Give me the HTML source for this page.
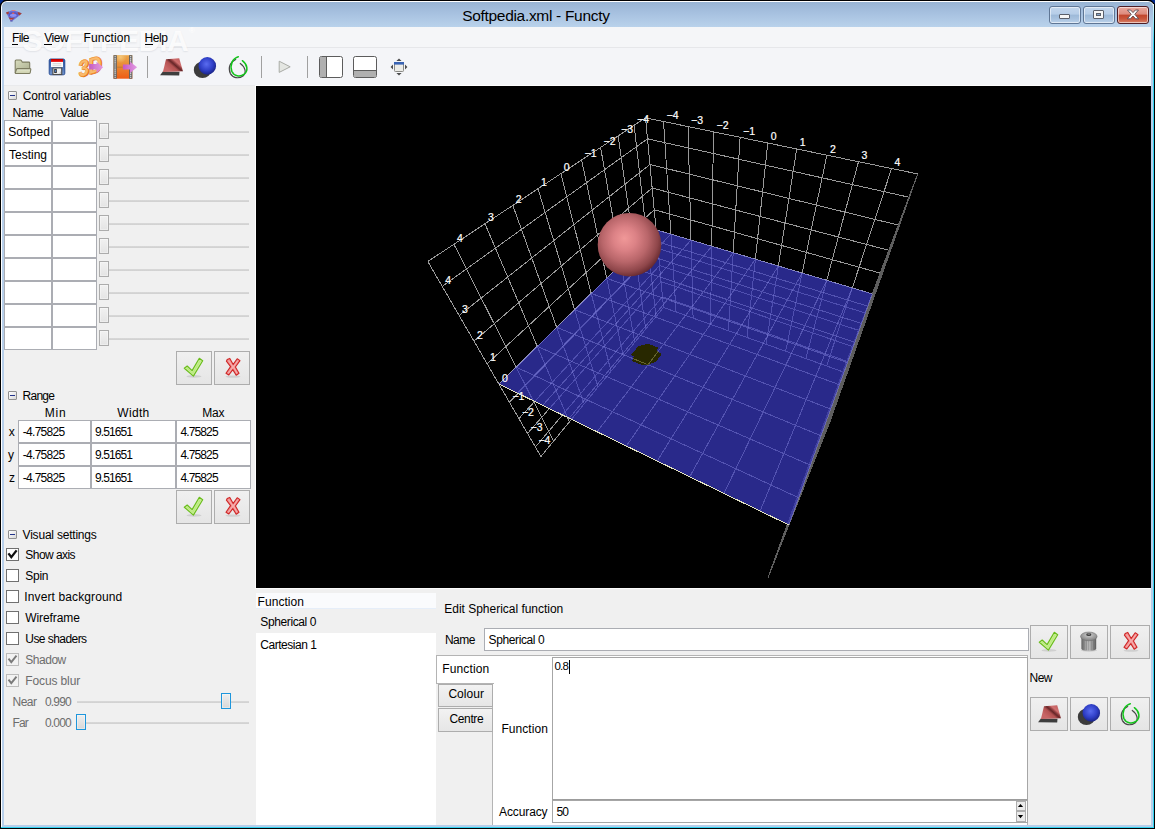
<!DOCTYPE html>
<html><head><meta charset="utf-8"><title>Softpedia.xml - Functy</title>
<style>
html,body{margin:0;padding:0;background:#000;}
body{width:1155px;height:829px;overflow:hidden;position:relative;font-family:"Liberation Sans",sans-serif;font-size:12px;color:#000;}
.a{position:absolute;box-sizing:border-box;}
.t{position:absolute;white-space:pre;font-family:"Liberation Sans",sans-serif;}
svg{position:absolute;overflow:visible;}
.gl{left:256px;top:86px;overflow:hidden;}
.cell{position:absolute;box-sizing:border-box;background:#fff;border:1px solid #abadb3;}
.btn{position:absolute;box-sizing:border-box;border:1px solid #acacac;background:linear-gradient(#f2f2f2,#ebebeb 50%,#dddddd 51%,#cfcfcf);box-shadow:inset 0 0 0 1px rgba(255,255,255,.75);}
.fbtn{position:absolute;box-sizing:border-box;border:1px solid #adadad;background:linear-gradient(#f0f0f0,#e5e5e5);}
.exp{position:absolute;box-sizing:border-box;width:9px;height:9px;border:1px solid #919191;border-radius:1px;background:linear-gradient(135deg,#fff,#d8d8d8);}
.exp:after{content:"";position:absolute;left:1px;top:3px;width:5px;height:1px;background:#22338a;}
.cb{position:absolute;box-sizing:border-box;width:13px;height:13px;border:1px solid #707070;background:#fff;}
.cb.dis{border-color:#bcbcbc;background:#f2f2f2;}
.trk{position:absolute;height:2px;background:linear-gradient(#d9d9d9,#d0d0d0);}
.thumb{position:absolute;box-sizing:border-box;width:10px;height:16px;border:1px solid #acacac;background:linear-gradient(#f1f1f1,#e4e4e4);box-shadow:inset 0 0 0 1px rgba(255,255,255,.35);}
</style></head>
<body>
<div class="a" style="left:0;top:0;width:1155px;height:829px;background:#000;"></div>
<div class="a" style="left:1px;top:1px;width:1153px;height:827px;background:#fff;border-radius:6px 6px 0 0;"></div>
<div class="a" style="left:1px;top:827px;width:1153px;height:1px;background:#32d2f0;"></div>
<div class="a" style="left:1153px;top:4px;width:1px;height:824px;background:linear-gradient(#e8fbff,#32d2f0 40px);"></div>
<div class="a" style="left:2px;top:2px;width:1151px;height:825px;background:#b7cfea;border-radius:5px 5px 0 0;"></div>
<div class="a" style="left:2px;top:2px;width:1151px;height:25px;background:linear-gradient(#98b4d4,#a7c1e0 45%,#b9d2eb);border-radius:5px 5px 0 0;"></div>
<div class="a" style="left:0;top:0;width:4px;height:4px;background:#00288c;clip-path:polygon(0 0,100% 0,0 100%);"></div>
<div class="a" style="left:1151px;top:0;width:4px;height:4px;background:#00288c;clip-path:polygon(0 0,100% 0,100% 100%);"></div>
<div class="a" style="left:4px;top:27px;width:1147px;height:798px;background:#f0f0f0;"></div>
<div class="a" style="left:4px;top:27px;width:1147px;height:20px;background:#f5f6f8;"></div>
<div class="a" style="left:4px;top:47px;width:1147px;height:1px;background:#e6e7ea;"></div>
<div class="a" style="left:4px;top:48px;width:1147px;height:37px;background:#f4f5f8;"></div>
<div class="a" style="left:4px;top:85px;width:251px;height:1px;background:#e9eaec;"></div>
<div class="a" style="left:255px;top:85px;width:896px;height:1px;background:#fdfdfd;"></div>
<span class="t" style="left:462.20px;top:5.78px;font-size:15.5px;line-height:19.5px;color:#000;letter-spacing:-0.307px;">Softpedia.xml - Functy</span><svg class="gl" width="895" height="502" viewBox="0 0 895 502">
<defs>
<radialGradient id="sph" cx="0.44" cy="0.42" r="0.60" fx="0.42" fy="0.40">
<stop offset="0" stop-color="#f09898"/><stop offset="0.3" stop-color="#dc8286"/><stop offset="0.6" stop-color="#b9666a"/><stop offset="0.85" stop-color="#8e464a"/><stop offset="1" stop-color="#64282e"/>
</radialGradient>
<clipPath id="qc"><polygon points="400.1,143.8 616.3,207.9 532.9,439.0 242.9,298.1"/></clipPath>
<clipPath id="shc"><polygon points="374.8,269.1 382.4,260.2 392.4,257.7 402.9,261.9 400.6,264.4 405.6,268.2 400.3,275.3 393.1,278.5 385.1,278.5 376.1,275.1 377.9,270.4"/></clipPath>
</defs>
<rect width="895" height="502" fill="#000"/>
<g fill="none" stroke="#999" stroke-width="1" shape-rendering="crispEdges">
<path d="M407.5 221.5L389.5 31.8M407.5 221.5L284.9 370.5M400.0 230.6L378.1 39.3M406.4 210.8L279.4 361.0M389.7 243.1L362.1 49.9M405.0 195.7L271.5 347.5M378.8 256.4L344.6 61.4M403.5 179.6L262.9 332.6M367.3 270.4L325.6 73.9M401.9 162.4L253.4 316.2M355.0 285.3L304.8 87.6M400.1 143.8L242.9 298.1M342.0 301.1L282.0 102.7M398.2 123.7L231.1 277.8M328.2 317.9L256.8 119.3M396.1 102.0L218.0 255.1M313.4 335.8L229.0 137.7M393.9 78.5L203.1 229.5M297.6 355.0L197.9 158.2M391.5 52.8L186.2 200.4M284.9 370.5L171.8 175.5M389.5 31.8L171.8 175.5"/><path d="M407.5 221.5L389.5 31.8M407.5 221.5L586.8 285.8M420.1 226.0L407.5 35.5M406.4 210.8L590.8 275.2M437.1 232.1L432.0 40.5M405.0 195.7L596.4 260.4M454.5 238.4L457.5 45.8M403.5 179.6L602.5 244.3M472.5 244.8L484.1 51.3M401.9 162.4L609.1 226.9M491.0 251.5L511.8 57.0M400.1 143.8L616.3 207.9M510.1 258.3L540.7 62.9M398.2 123.7L624.1 187.1M529.6 265.3L570.9 69.2M396.1 102.0L632.8 164.3M549.8 272.5L602.5 75.7M393.9 78.5L642.3 139.1M570.6 280.0L635.6 82.5M391.5 52.8L652.9 111.2M586.8 285.8L661.7 87.9M389.5 31.8L661.7 87.9"/>
</g>
<polygon points="661.7,87.9 574.1,335.2 512.0,491.6 586.8,285.8" fill="#5e5e5e" stroke="#5e5e5e" stroke-width="1" shape-rendering="crispEdges"/>
<polygon points="400.1,143.8 616.3,207.9 532.9,439.0 242.9,298.1" fill="#3737b8" fill-opacity="0.75" shape-rendering="crispEdges"/>
<g fill="none" stroke="#9090e6" stroke-opacity="0.42" stroke-width="1" shape-rendering="crispEdges"><path d="M400.1 143.8L242.9 298.1M400.1 143.8L616.3 207.9M414.9 148.2L261.3 307.0M391.1 152.6L611.8 220.2M435.0 154.1L286.7 319.3M378.5 165.0L605.6 237.5M455.7 160.3L313.2 332.3M365.1 178.1L598.8 256.3M477.2 166.6L341.1 345.8M350.7 192.3L591.5 276.7M499.4 173.2L370.4 360.0M335.2 207.4L583.5 298.8M522.3 180.0L401.2 375.0M318.6 223.7L574.7 323.1M546.1 187.1L433.7 390.8M300.7 241.3L565.1 349.8M570.7 194.4L467.9 407.4M281.2 260.4L554.5 379.2M596.3 201.9L504.1 425.0M260.1 281.1L542.7 411.8M616.3 207.9L532.9 439.0M242.9 298.1L532.9 439.0"/></g>
<path d="M242.9 298.1L532.9 439.0" stroke="#e2e2c4" stroke-width="1" fill="none" shape-rendering="crispEdges"/>
<polygon points="374.8,269.1 382.4,260.2 392.4,257.7 402.9,261.9 400.6,264.4 405.6,268.2 400.3,275.3 393.1,278.5 385.1,278.5 376.1,275.1 377.9,270.4" fill="#282800" shape-rendering="crispEdges"/>
<g clip-path="url(#shc)" fill="none" stroke="#66662e" stroke-width="1" shape-rendering="crispEdges"><path d="M400.1 143.8L242.9 298.1M400.1 143.8L616.3 207.9M414.9 148.2L261.3 307.0M391.1 152.6L611.8 220.2M435.0 154.1L286.7 319.3M378.5 165.0L605.6 237.5M455.7 160.3L313.2 332.3M365.1 178.1L598.8 256.3M477.2 166.6L341.1 345.8M350.7 192.3L591.5 276.7M499.4 173.2L370.4 360.0M335.2 207.4L583.5 298.8M522.3 180.0L401.2 375.0M318.6 223.7L574.7 323.1M546.1 187.1L433.7 390.8M300.7 241.3L565.1 349.8M570.7 194.4L467.9 407.4M281.2 260.4L554.5 379.2M596.3 201.9L504.1 425.0M260.1 281.1L542.7 411.8M616.3 207.9L532.9 439.0M242.9 298.1L532.9 439.0"/></g>
<circle cx="373.5" cy="158.7" r="31.8" fill="url(#sph)"/>
<g fill="#fff" stroke="#fff" stroke-width="0.2" font-family='"Liberation Sans", sans-serif' font-size="10.5"><text x="410.5" y="32.9">−4</text><text x="381.1" y="36.7">−4</text><text x="282.4" y="358.4">−4</text><text x="435.0" y="37.9">−3</text><text x="365.1" y="47.3">−3</text><text x="274.5" y="344.9">−3</text><text x="460.5" y="43.2">−2</text><text x="347.6" y="58.8">−2</text><text x="265.9" y="330.0">−2</text><text x="487.1" y="48.7">−1</text><text x="328.6" y="71.3">−1</text><text x="256.4" y="313.6">−1</text><text x="514.8" y="54.4">0</text><text x="307.8" y="85.0">0</text><text x="245.9" y="295.5">0</text><text x="543.7" y="60.3">1</text><text x="285.0" y="100.1">1</text><text x="234.1" y="275.2">1</text><text x="573.9" y="66.6">2</text><text x="259.8" y="116.7">2</text><text x="221.0" y="252.5">2</text><text x="605.5" y="73.1">3</text><text x="232.0" y="135.1">3</text><text x="206.1" y="226.9">3</text><text x="638.6" y="79.9">4</text><text x="200.9" y="155.6">4</text><text x="189.2" y="197.8">4</text></g>
</svg>
<svg style="left:5px;top:9px" width="18" height="14" viewBox="0 0 18 14">
<path d="M1.2 3.6 L6.5 1.4 L12 2.2 L16.6 4.2 L13.5 7.2 L8 11.6 L5.6 12.2 L3.4 8 Z" fill="#6a6ed8"/>
<path d="M1 3.6 L3.6 2.4 L4 4.6 L2 5.4Z M12.6 3 L16.8 4.2 L14.6 6.4 L12.8 5Z M3.6 8.2 L6.8 9 L9.8 8.4 L7.6 10.4 L5 10.4Z" fill="#a84034"/>
<path d="M6.9 1.2 h3.6 v0.9 h-3.6z M5.2 10.2 h1.8 v1 h-1.8z" fill="#ee7468"/>
<ellipse cx="8.3" cy="5.6" rx="4.6" ry="2.5" fill="#5458c0"/>
<ellipse cx="8.3" cy="6.3" rx="3.4" ry="1.6" fill="#8c90f4"/>
<ellipse cx="8.2" cy="4.3" rx="1.3" ry="0.8" fill="#e8645c"/>
<path d="M5.4 11.4 h2.2 v1 h-2.2z" fill="#4448a8"/>
</svg>
<div class="a" style="left:1049px;top:6px;width:32px;height:18px;border:1px solid #5f7695;border-radius:3px;background:linear-gradient(#c3d6ec,#b6cde8 45%,#9db9d8 50%,#a8c2df 75%,#bdd3eb);box-shadow:inset 0 0 0 1px rgba(255,255,255,.55);"></div>
<div class="a" style="left:1083px;top:6px;width:32px;height:18px;border:1px solid #5f7695;border-radius:3px;background:linear-gradient(#c3d6ec,#b6cde8 45%,#9db9d8 50%,#a8c2df 75%,#bdd3eb);box-shadow:inset 0 0 0 1px rgba(255,255,255,.55);"></div>
<div class="a" style="left:1117px;top:6px;width:32px;height:18px;border:1px solid #4e1c24;border-radius:3px;background:linear-gradient(#e9a99e,#dd8a7c 45%,#c1452c 50%,#c9573c 75%,#d8836c);box-shadow:inset 0 0 0 1px rgba(255,255,255,.55);"></div>
<div class="a" style="left:1059px;top:14px;width:11px;height:5px;background:#f6f6f6;border:1px solid #5a5f6a;border-radius:1px;"></div>
<div class="a" style="left:1093px;top:10px;width:11px;height:9px;background:#f6f6f6;border:1px solid #5a5f6a;border-radius:1px;"></div>
<div class="a" style="left:1096px;top:13px;width:5px;height:3px;background:#8aa6c8;border:1px solid #5a5f6a;"></div>
<svg style="left:1126px;top:9px" width="14" height="11" viewBox="0 0 14 11"><path d="M1.5 1 L4.6 1 L7 3.6 L9.4 1 L12.5 1 L8.8 5.3 L12.7 9.8 L9.5 9.8 L7 7 L4.5 9.8 L1.3 9.8 L5.2 5.3 Z" fill="#fbfbfb" stroke="#5a4a50" stroke-width="0.9" stroke-linejoin="round"/></svg>
<span class="t" style="left:22.50px;top:24.30px;font-size:30px;line-height:34px;color:rgba(255,255,255,.85);letter-spacing:-0.689px;font-weight:bold;text-shadow:0 1px 1.5px rgba(90,100,120,.13);">SOFTPEDIA</span>
<span class="t" style="left:189.00px;top:24.73px;font-size:8px;line-height:12px;color:rgba(255,255,255,.9);">®</span>
<span class="t" style="left:12.10px;top:29.94px;font-size:12px;line-height:16px;color:#000;letter-spacing:-0.654px;">File</span>
<div class="a" style="left:12.1px;top:44px;width:6px;height:1px;background:#000;"></div>
<span class="t" style="left:44.20px;top:29.94px;font-size:12px;line-height:16px;color:#000;letter-spacing:-0.476px;">View</span>
<div class="a" style="left:44.2px;top:44px;width:7.5px;height:1px;background:#000;"></div>
<span class="t" style="left:83.50px;top:29.94px;font-size:12px;line-height:16px;color:#000;letter-spacing:0.093px;">Function</span>
<div class="a" style="left:83.5px;top:44px;width:0px;height:1px;background:#000;"></div>
<span class="t" style="left:144.60px;top:29.94px;font-size:12px;line-height:16px;color:#000;letter-spacing:-0.435px;">Help</span>
<div class="a" style="left:144.6px;top:44px;width:8.5px;height:1px;background:#000;"></div>
<svg style="left:14px;top:58px" width="20" height="18" viewBox="0 0 20 18">
<defs><linearGradient id="fo1" x1="0" y1="0" x2="1" y2="1"><stop offset="0" stop-color="#d8dcbe"/><stop offset="1" stop-color="#a9ad8c"/></linearGradient>
<linearGradient id="fo2" x1="0" y1="0" x2="0" y2="1"><stop offset="0" stop-color="#e6e9d2"/><stop offset="1" stop-color="#c9cdab"/></linearGradient></defs>
<path d="M1.2 14.6 V3 Q1.2 2.05 2.2 2.05 H6.4 Q7.1 2.05 7.5 2.8 L8.2 4.1 H14.8 Q15.7 4.1 15.7 5 V10.8 H3.3 L2.6 14.6 Z" fill="url(#fo1)" stroke="#7c7c60" stroke-width="1.1" stroke-linejoin="round"/>
<path d="M3.6 10.6 H16 Q16.9 10.6 16.8 11.5 L16.2 14.7 Q16 15.55 15.1 15.55 H2.2 Q1.2 15.55 1.3 14.6 L2.5 11.4 Q2.7 10.6 3.6 10.6Z" fill="url(#fo2)" stroke="#7c7c60" stroke-width="1.1" stroke-linejoin="round"/>
<path d="M3.4 13.6 H15.4" stroke="#d6d9b8" stroke-width="1.2"/>
</svg>
<svg style="left:48px;top:58px" width="18" height="18" viewBox="0 0 18 18">
<defs><linearGradient id="fl1" x1="0" y1="0" x2="0" y2="1"><stop offset="0" stop-color="#2c52a0"/><stop offset=".55" stop-color="#4a72b8"/><stop offset="1" stop-color="#7696cc"/></linearGradient>
<linearGradient id="fl2" x1="0" y1="0" x2="0" y2="1"><stop offset="0" stop-color="#a80000"/><stop offset=".4" stop-color="#e00000"/><stop offset="1" stop-color="#e81010"/></linearGradient></defs>
<rect x="1.2" y="1" width="15.6" height="15.8" rx="1.5" fill="url(#fl1)" stroke="#1f4690" stroke-width=".9"/>
<rect x="3" y="1" width="12" height="8.1" fill="#fafafa"/>
<rect x="3" y="1" width="12" height="2.9" fill="url(#fl2)"/>
<path d="M4.6 5.6 H13.4 M4.6 7.3 H13.4" stroke="#d2d2d2" stroke-width="0.9"/>
<rect x="4.9" y="9.9" width="8.8" height="6.6" fill="#f0f0f0" stroke="#4e4e4e" stroke-width="1.1"/>
<path d="M11 15.8 L13 13 V15.8Z" fill="#c8c8c8"/>
<rect x="6.6" y="11.3" width="1.9" height="3.3" fill="#4c7cc0" stroke="#3a3a3a" stroke-width=".8"/>
</svg>
<svg style="left:78px;top:55px" width="27" height="24" viewBox="0 0 27 24">
<defs><linearGradient id="arw" x1="0" x2="1"><stop offset="0" stop-color="#c458c4"/><stop offset="1" stop-color="#e39ce3"/></linearGradient></defs>
<g transform="translate(0.6,22.6) skewY(-16) scale(0.8,1)">
<text x="1.4" y="0.9" font-family="Liberation Sans" font-weight="bold" font-size="23.3" fill="#dc741c" letter-spacing="-0.6">3D</text>
<text x="0" y="0" font-family="Liberation Sans" font-weight="bold" font-size="23.3" fill="#f7a850" stroke="#ee8a2a" stroke-width="0.6" letter-spacing="-0.6">3D</text>
<text x="0.5" y="-0.7" font-family="Liberation Sans" font-weight="bold" font-size="21.5" fill="#fccc8c" letter-spacing="0.4" opacity=".5">3D</text>
</g>
<path d="M11.2 9.1 H18.5 V6.7 L25.2 12.15 L18.5 17.9 V14.6 H11.2Z" fill="url(#arw)" opacity=".96"/>
</svg>
<svg style="left:113px;top:55px" width="26" height="25" viewBox="0 0 26 25">
<defs><linearGradient id="flm" x1="0" y1="0" x2="0" y2="1"><stop offset="0" stop-color="#eaa64c"/><stop offset=".45" stop-color="#e98a34"/><stop offset="1" stop-color="#ef5c14"/></linearGradient>
<radialGradient id="flh" cx=".3" cy=".15" r=".5"><stop offset="0" stop-color="#f6cc80" stop-opacity=".9"/><stop offset="1" stop-color="#f6cc80" stop-opacity="0"/></radialGradient></defs>
<rect x="0.5" y="0.2" width="18.8" height="23.5" fill="url(#flm)"/>
<rect x="3.8" y="0.2" width="12.2" height="12" fill="url(#flh)"/>
<rect x="0.5" y="0.2" width="3.3" height="23.5" fill="#636363"/><rect x="16" y="0.2" width="3.3" height="23.5" fill="#636363"/>
<path d="M2.15 1.2 V23.4" stroke="#ececec" stroke-width="1.3" stroke-dasharray="1.15 0.9"/>
<path d="M17.65 1.2 V23.4" stroke="#ececec" stroke-width="1.3" stroke-dasharray="1.15 0.9"/>
<path d="M4.2 12.2 H9.6" stroke="#b87a34" stroke-width="1"/>
<path d="M9.9 9.4 H17 V6.7 L24.1 12.2 L17 17.9 V14.6 H9.9Z" fill="url(#arw)"/>
</svg>
<div class="a" style="left:147px;top:56px;width:1px;height:22px;background:#a0a0a0;"></div>
<div class="a" style="left:261px;top:56px;width:1px;height:22px;background:#a0a0a0;"></div>
<div class="a" style="left:307px;top:56px;width:1px;height:22px;background:#a0a0a0;"></div>
<svg style="left:159px;top:57px" width="25" height="20" viewBox="0 0 25 20">
<defs><linearGradient id="rs159" gradientUnits="userSpaceOnUse" x1="21.4" y1="1.9" x2="10.9" y2="14.1">
<stop offset="0" stop-color="#c25e5e"/><stop offset=".30" stop-color="#d07070"/><stop offset=".42" stop-color="#8e3c3e"/><stop offset=".51" stop-color="#662628"/><stop offset=".66" stop-color="#b45252"/><stop offset="1" stop-color="#c86666"/></linearGradient></defs>
<path d="M1.1 18.3 L3.9 14.6 L20.5 14.8 L20.2 18.5Z" fill="#3e3e3e"/>
<path d="M7 2.3 L20.2 1.3 L24 14.3 L3.9 14.9Z" fill="url(#rs159)"/>
</svg>
<svg style="left:193px;top:56px" width="24" height="22" viewBox="0 0 24 22">
<defs><radialGradient id="bs193" cx="0.45" cy="0.4" r="0.6"><stop offset="0" stop-color="#5a6cf0"/><stop offset="0.6" stop-color="#3040c8"/><stop offset="1" stop-color="#1a2488"/></radialGradient></defs>
<ellipse cx="9.5" cy="13.9" rx="8.7" ry="8.2" fill="#3c3c3c"/>
<circle cx="14.3" cy="9.9" r="8.8" fill="url(#bs193)"/>
</svg>
<svg style="left:227px;top:55px" width="22" height="24" viewBox="0 0 22 24">
<path d="M8.7 4.5 C3.2 7 0.6 12.6 3.4 18.6 C5.8 23 11.6 24 16 21 C19.6 18 18.6 12 13.3 8.4" fill="none" stroke="#484848" stroke-width="1.2" stroke-linecap="round"/>
<path d="M11.3 1.7 C5.6 3.4 2.6 9.6 4.8 16.2 C6.8 21 12.8 22.4 17.2 19.2 C21.4 15.8 20.6 9.6 15.4 5.7" fill="none" stroke="#12c41a" stroke-width="1.55" stroke-linecap="round"/>
</svg>
<svg style="left:277px;top:59px" width="16" height="16" viewBox="0 0 16 16"><path d="M2.2 2.2 L13.2 7.8 L2.2 13.4Z" fill="#e4e6e2" stroke="#a9aba6" stroke-width="1" stroke-linejoin="round"/></svg>
<svg style="left:318px;top:55px" width="26" height="24" viewBox="0 0 26 24"><rect x="1.5" y="1.5" width="23" height="21" rx="2" fill="#fff" stroke="#5c5c5c" stroke-width="1"/><path d="M2 3 Q2 2 3 2 H8.5 V22 H3 Q2 22 2 21Z" fill="#b0b0b0"/><path d="M8.5 2 V22" stroke="#5c5c5c" stroke-width="1"/></svg>
<svg style="left:352px;top:55px" width="26" height="24" viewBox="0 0 26 24"><rect x="1.5" y="1.5" width="23" height="21" rx="2" fill="#fff" stroke="#5c5c5c" stroke-width="1"/><path d="M2 15.5 H24 V21 Q24 22 23 22 H3 Q2 22 2 21Z" fill="#b0b0b0"/><path d="M2 15.5 H24" stroke="#5c5c5c" stroke-width="1"/></svg>
<svg style="left:390px;top:58px" width="18" height="18" viewBox="0 0 18 18">
<rect x="4.5" y="4.5" width="9" height="9" rx="0.8" fill="#ecece8" stroke="#8a8a86" stroke-width="1"/>
<rect x="4" y="4" width="10" height="2.6" fill="#3a64b4"/>
<path d="M9 0.6 L11.6 3 H6.4Z M9 17.4 L11.6 15 H6.4Z M0.6 9 L3 6.4 V11.6Z M17.4 9 L15 6.4 V11.6Z" fill="#4c4c4c"/></svg>
<div class="exp" style="left:8px;top:91px;"></div>
<span class="t" style="left:22.70px;top:87.74px;font-size:12px;line-height:16px;color:#000;letter-spacing:-0.109px;">Control variables</span>
<span class="t" style="left:12.40px;top:104.94px;font-size:12px;line-height:16px;color:#000;letter-spacing:-0.245px;">Name</span>
<span class="t" style="left:60.30px;top:104.94px;font-size:12px;line-height:16px;color:#000;letter-spacing:-0.282px;">Value</span>
<div class="cell" style="left:4px;top:120px;width:48px;height:23px;"></div>
<div class="cell" style="left:52px;top:120px;width:45px;height:23px;"></div>
<div class="trk" style="left:107px;top:131px;width:142px;"></div>
<div class="thumb" style="left:99px;top:123px;"></div>
<div class="cell" style="left:4px;top:143px;width:48px;height:23px;"></div>
<div class="cell" style="left:52px;top:143px;width:45px;height:23px;"></div>
<div class="trk" style="left:107px;top:154px;width:142px;"></div>
<div class="thumb" style="left:99px;top:146px;"></div>
<div class="cell" style="left:4px;top:166px;width:48px;height:23px;"></div>
<div class="cell" style="left:52px;top:166px;width:45px;height:23px;"></div>
<div class="trk" style="left:107px;top:177px;width:142px;"></div>
<div class="thumb" style="left:99px;top:169px;"></div>
<div class="cell" style="left:4px;top:189px;width:48px;height:23px;"></div>
<div class="cell" style="left:52px;top:189px;width:45px;height:23px;"></div>
<div class="trk" style="left:107px;top:200px;width:142px;"></div>
<div class="thumb" style="left:99px;top:192px;"></div>
<div class="cell" style="left:4px;top:212px;width:48px;height:23px;"></div>
<div class="cell" style="left:52px;top:212px;width:45px;height:23px;"></div>
<div class="trk" style="left:107px;top:223px;width:142px;"></div>
<div class="thumb" style="left:99px;top:215px;"></div>
<div class="cell" style="left:4px;top:235px;width:48px;height:23px;"></div>
<div class="cell" style="left:52px;top:235px;width:45px;height:23px;"></div>
<div class="trk" style="left:107px;top:246px;width:142px;"></div>
<div class="thumb" style="left:99px;top:238px;"></div>
<div class="cell" style="left:4px;top:258px;width:48px;height:23px;"></div>
<div class="cell" style="left:52px;top:258px;width:45px;height:23px;"></div>
<div class="trk" style="left:107px;top:269px;width:142px;"></div>
<div class="thumb" style="left:99px;top:261px;"></div>
<div class="cell" style="left:4px;top:281px;width:48px;height:23px;"></div>
<div class="cell" style="left:52px;top:281px;width:45px;height:23px;"></div>
<div class="trk" style="left:107px;top:292px;width:142px;"></div>
<div class="thumb" style="left:99px;top:284px;"></div>
<div class="cell" style="left:4px;top:304px;width:48px;height:23px;"></div>
<div class="cell" style="left:52px;top:304px;width:45px;height:23px;"></div>
<div class="trk" style="left:107px;top:315px;width:142px;"></div>
<div class="thumb" style="left:99px;top:307px;"></div>
<div class="cell" style="left:4px;top:327px;width:48px;height:23px;"></div>
<div class="cell" style="left:52px;top:327px;width:45px;height:23px;"></div>
<div class="trk" style="left:107px;top:338px;width:142px;"></div>
<div class="thumb" style="left:99px;top:330px;"></div>
<span class="t" style="left:8.20px;top:123.64px;font-size:12px;line-height:16px;color:#000;letter-spacing:0.051px;">Softped</span>
<span class="t" style="left:9.00px;top:146.54px;font-size:12px;line-height:16px;color:#000;">Testing</span>
<div class="fbtn" style="left:176px;top:351px;width:36px;height:34px;"></div>
<div class="fbtn" style="left:214px;top:351px;width:36px;height:34px;"></div>
<svg style="left:183px;top:357px" width="22" height="22" viewBox="0 0 22 22">
<ellipse cx="11" cy="19.4" rx="7.5" ry="1.3" fill="#000" opacity=".10"/>
<path d="M1.3 11.2 L4.2 9 L9.1 13.6 L16.3 1.3 L19.7 3.7 L10.4 19.1 Z" fill="#cdf09c" stroke="#6abd1c" stroke-width="1.15" stroke-linejoin="round"/>
<path d="M3.2 11.3 L4.2 10.6 L9.4 15.4 L16.8 3.1 L17.9 3.9 L10.1 16.9 Z" fill="#a6e45c" opacity=".45"/>
</svg>
<svg style="left:223px;top:357px" width="20" height="22" viewBox="0 0 20 22">
<ellipse cx="10" cy="19.6" rx="7.5" ry="1.2" fill="#000" opacity=".10"/>
<path d="M4.2 2.6 L6.8 1.4 L10.2 7.4 L14.2 1.8 L17 3.6 L12.4 10 L16 16.2 L13.2 18.2 L9.8 12.6 L5.8 18 L3 16.2 L7.6 9.6 L3.4 4.2 Z" fill="#f29292" stroke="#cf2626" stroke-width="1.1" stroke-linejoin="round"/>
<path d="M5.6 3.6 L10 10 L5.4 16.2 M14.8 3.6 L10.4 10 L14 16.2" fill="none" stroke="#f7b6b6" stroke-width="1" opacity=".85"/>
</svg>
<div class="exp" style="left:8px;top:391px;"></div>
<span class="t" style="left:22.60px;top:388.04px;font-size:12px;line-height:16px;color:#000;letter-spacing:-0.772px;">Range</span>
<span class="t" style="left:44.70px;top:404.94px;font-size:12px;line-height:16px;color:#000;letter-spacing:0.769px;">Min</span>
<span class="t" style="left:117.30px;top:404.94px;font-size:12px;line-height:16px;color:#000;letter-spacing:0.325px;">Width</span>
<span class="t" style="left:202.20px;top:404.94px;font-size:12px;line-height:16px;color:#000;letter-spacing:-0.185px;">Max</span>
<span class="t" style="left:8.80px;top:424.04px;font-size:12px;line-height:16px;color:#000;">x</span>
<div class="cell" style="left:18px;top:420px;width:73px;height:23px;"></div>
<div class="cell" style="left:91px;top:420px;width:85px;height:23px;"></div>
<div class="cell" style="left:176px;top:420px;width:75px;height:23px;"></div>
<span class="t" style="left:22.80px;top:424.04px;font-size:12px;line-height:16px;color:#000;letter-spacing:-0.714px;">-4.75825</span>
<span class="t" style="left:95.00px;top:424.04px;font-size:12px;line-height:16px;color:#000;letter-spacing:-0.900px;">9.51651</span>
<span class="t" style="left:180.40px;top:424.04px;font-size:12px;line-height:16px;color:#000;letter-spacing:-0.867px;">4.75825</span>
<span class="t" style="left:8.10px;top:447.04px;font-size:12px;line-height:16px;color:#000;">y</span>
<div class="cell" style="left:18px;top:443px;width:73px;height:23px;"></div>
<div class="cell" style="left:91px;top:443px;width:85px;height:23px;"></div>
<div class="cell" style="left:176px;top:443px;width:75px;height:23px;"></div>
<span class="t" style="left:22.80px;top:447.04px;font-size:12px;line-height:16px;color:#000;letter-spacing:-0.714px;">-4.75825</span>
<span class="t" style="left:95.00px;top:447.04px;font-size:12px;line-height:16px;color:#000;letter-spacing:-0.900px;">9.51651</span>
<span class="t" style="left:180.40px;top:447.04px;font-size:12px;line-height:16px;color:#000;letter-spacing:-0.867px;">4.75825</span>
<span class="t" style="left:9.00px;top:470.04px;font-size:12px;line-height:16px;color:#000;">z</span>
<div class="cell" style="left:18px;top:466px;width:73px;height:23px;"></div>
<div class="cell" style="left:91px;top:466px;width:85px;height:23px;"></div>
<div class="cell" style="left:176px;top:466px;width:75px;height:23px;"></div>
<span class="t" style="left:22.80px;top:470.04px;font-size:12px;line-height:16px;color:#000;letter-spacing:-0.714px;">-4.75825</span>
<span class="t" style="left:95.00px;top:470.04px;font-size:12px;line-height:16px;color:#000;letter-spacing:-0.900px;">9.51651</span>
<span class="t" style="left:180.40px;top:470.04px;font-size:12px;line-height:16px;color:#000;letter-spacing:-0.867px;">4.75825</span>
<div class="fbtn" style="left:176px;top:490px;width:36px;height:34px;"></div>
<div class="fbtn" style="left:214px;top:490px;width:36px;height:34px;"></div>
<svg style="left:183px;top:496px" width="22" height="22" viewBox="0 0 22 22">
<ellipse cx="11" cy="19.4" rx="7.5" ry="1.3" fill="#000" opacity=".10"/>
<path d="M1.3 11.2 L4.2 9 L9.1 13.6 L16.3 1.3 L19.7 3.7 L10.4 19.1 Z" fill="#cdf09c" stroke="#6abd1c" stroke-width="1.15" stroke-linejoin="round"/>
<path d="M3.2 11.3 L4.2 10.6 L9.4 15.4 L16.8 3.1 L17.9 3.9 L10.1 16.9 Z" fill="#a6e45c" opacity=".45"/>
</svg>
<svg style="left:223px;top:496px" width="20" height="22" viewBox="0 0 20 22">
<ellipse cx="10" cy="19.6" rx="7.5" ry="1.2" fill="#000" opacity=".10"/>
<path d="M4.2 2.6 L6.8 1.4 L10.2 7.4 L14.2 1.8 L17 3.6 L12.4 10 L16 16.2 L13.2 18.2 L9.8 12.6 L5.8 18 L3 16.2 L7.6 9.6 L3.4 4.2 Z" fill="#f29292" stroke="#cf2626" stroke-width="1.1" stroke-linejoin="round"/>
<path d="M5.6 3.6 L10 10 L5.4 16.2 M14.8 3.6 L10.4 10 L14 16.2" fill="none" stroke="#f7b6b6" stroke-width="1" opacity=".85"/>
</svg>
<div class="exp" style="left:8px;top:530px;"></div>
<span class="t" style="left:22.60px;top:527.14px;font-size:12px;line-height:16px;color:#000;letter-spacing:-0.211px;">Visual settings</span>
<div class="cb" style="left:6px;top:548px;"></div>
<svg style="left:6px;top:548px" width="13" height="13" viewBox="0 0 13 13"><path d="M3.1 6.3 L5.3 9.1 L9.9 3.3" fill="none" stroke="#111" stroke-width="2.3" stroke-linecap="square" stroke-linejoin="miter"/></svg>
<span class="t" style="left:25.30px;top:547.14px;font-size:12px;line-height:16px;color:#000;letter-spacing:-0.549px;">Show axis</span>
<div class="cb" style="left:6px;top:569px;"></div>
<span class="t" style="left:25.30px;top:568.14px;font-size:12px;line-height:16px;color:#000;letter-spacing:-0.281px;">Spin</span>
<div class="cb" style="left:6px;top:590px;"></div>
<span class="t" style="left:24.30px;top:589.14px;font-size:12px;line-height:16px;color:#000;letter-spacing:0.120px;">Invert background</span>
<div class="cb" style="left:6px;top:611px;"></div>
<span class="t" style="left:25.30px;top:610.14px;font-size:12px;line-height:16px;color:#000;letter-spacing:-0.095px;">Wireframe</span>
<div class="cb" style="left:6px;top:632px;"></div>
<span class="t" style="left:25.30px;top:631.14px;font-size:12px;line-height:16px;color:#000;letter-spacing:-0.557px;">Use shaders</span>
<div class="cb dis" style="left:6px;top:653px;"></div>
<svg style="left:6px;top:653px" width="13" height="13" viewBox="0 0 13 13"><path d="M3.1 6.3 L5.3 9.1 L9.9 3.3" fill="none" stroke="#7a7a7a" stroke-width="1.9" stroke-linecap="square" stroke-linejoin="miter"/></svg>
<span class="t" style="left:25.30px;top:652.14px;font-size:12px;line-height:16px;color:#6d6d6d;letter-spacing:-0.480px;">Shadow</span>
<div class="cb dis" style="left:6px;top:674px;"></div>
<svg style="left:6px;top:674px" width="13" height="13" viewBox="0 0 13 13"><path d="M3.1 6.3 L5.3 9.1 L9.9 3.3" fill="none" stroke="#7a7a7a" stroke-width="1.9" stroke-linecap="square" stroke-linejoin="miter"/></svg>
<span class="t" style="left:25.30px;top:673.14px;font-size:12px;line-height:16px;color:#6d6d6d;letter-spacing:-0.125px;">Focus blur</span>
<span class="t" style="left:12.60px;top:693.84px;font-size:12px;line-height:16px;color:#6d6d6d;letter-spacing:-0.571px;">Near</span>
<span class="t" style="left:45.00px;top:693.84px;font-size:12px;line-height:16px;color:#6d6d6d;letter-spacing:-0.839px;">0.990</span>
<span class="t" style="left:12.60px;top:714.84px;font-size:12px;line-height:16px;color:#6d6d6d;letter-spacing:-0.900px;">Far</span>
<span class="t" style="left:45.00px;top:714.84px;font-size:12px;line-height:16px;color:#6d6d6d;letter-spacing:-0.839px;">0.000</span>
<div class="trk" style="left:77px;top:701px;width:172px;"></div>
<div class="trk" style="left:77px;top:722px;width:172px;"></div>
<div class="thumb" style="left:221px;top:693px;border-color:#1e96dc;background:linear-gradient(#eeeeee,#d8d8d8);"></div>
<div class="thumb" style="left:76px;top:714px;border-color:#1e96dc;background:linear-gradient(#eeeeee,#d8d8d8);"></div>
<div class="a" style="left:255px;top:86px;width:1px;height:503px;background:#fdfdfd;"></div>
<div class="a" style="left:255px;top:588px;width:896px;height:1px;background:#fdfdfd;"></div>
<div class="a" style="left:256px;top:593px;width:180px;height:16px;background:#fafbfd;border-bottom:1px solid #e6eef9;"></div>
<div class="a" style="left:256px;top:633px;width:180px;height:192px;background:#fff;"></div>
<span class="t" style="left:257.60px;top:593.94px;font-size:12px;line-height:16px;color:#000;letter-spacing:0.050px;">Function</span>
<span class="t" style="left:260.30px;top:614.14px;font-size:12px;line-height:16px;color:#000;letter-spacing:-0.386px;">Spherical 0</span>
<span class="t" style="left:260.30px;top:637.24px;font-size:12px;line-height:16px;color:#000;letter-spacing:-0.479px;">Cartesian 1</span>
<span class="t" style="left:444.30px;top:601.14px;font-size:12px;line-height:16px;color:#000;letter-spacing:-0.019px;">Edit Spherical function</span>
<span class="t" style="left:444.90px;top:631.94px;font-size:12px;line-height:16px;color:#000;letter-spacing:-0.479px;">Name</span>
<div class="cell" style="left:484px;top:628px;width:545px;height:23px;"></div>
<span class="t" style="left:488.60px;top:631.94px;font-size:12px;line-height:16px;color:#000;letter-spacing:-0.386px;">Spherical 0</span>
<div class="a" style="left:492px;top:655px;width:536px;height:170px;background:#fff;border-top:1px solid #b4b4b4;border-left:1px solid #b4b4b4;border-right:1px solid #b4b4b4;"></div>
<div class="a" style="left:436px;top:655px;width:58px;height:29px;background:#fff;border:1px solid #b4b4b4;border-right:none;"></div>
<div class="a" style="left:438px;top:684px;width:55px;height:23px;background:linear-gradient(#f2f2f2,#e6e6e6);border:1px solid #adadad;"></div>
<div class="a" style="left:438px;top:708px;width:55px;height:24px;background:linear-gradient(#f2f2f2,#e6e6e6);border:1px solid #adadad;"></div>
<span class="t" style="left:442.20px;top:660.84px;font-size:12px;line-height:16px;color:#000;letter-spacing:0.150px;">Function</span>
<span class="t" style="left:448.40px;top:686.24px;font-size:12px;line-height:16px;color:#000;letter-spacing:0.029px;">Colour</span>
<span class="t" style="left:449.60px;top:711.04px;font-size:12px;line-height:16px;color:#000;letter-spacing:-0.409px;">Centre</span>
<span class="t" style="left:501.40px;top:720.64px;font-size:12px;line-height:16px;color:#000;letter-spacing:0.064px;">Function</span>
<div class="a" style="left:552px;top:657px;width:476px;height:143px;background:#fff;border:1px solid #a6a6a6;border-bottom-color:#9c9c9c;"></div>
<span class="t" style="left:554.60px;top:659.37px;font-size:11.5px;line-height:15.5px;color:#000;letter-spacing:-0.900px;">0.8</span>
<div class="a" style="left:569px;top:660px;width:1px;height:14px;background:#000;"></div>
<span class="t" style="left:499.00px;top:804.04px;font-size:12px;line-height:16px;color:#000;letter-spacing:-0.107px;">Accuracy</span>
<div class="a" style="left:552px;top:800px;width:476px;height:23px;background:#fff;border:1px solid #a6a6a6;"></div>
<span class="t" style="left:556.60px;top:804.04px;font-size:12px;line-height:16px;color:#000;letter-spacing:-0.900px;">50</span>
<div class="a" style="left:1016px;top:801px;width:10px;height:10px;background:#ebebeb;border:1px solid #aeaeae;"></div>
<div class="a" style="left:1016px;top:811px;width:10px;height:11px;background:#ebebeb;border:1px solid #aeaeae;"></div>
<svg style="left:1016px;top:801px" width="10" height="22" viewBox="0 0 10 22"><path d="M1.9 6.1 L4.5 2.9 L7.1 6.1Z M1.9 14 L4.5 17.3 L7.1 14Z" fill="#000"/></svg>
<div class="fbtn" style="left:1030px;top:625px;width:38px;height:34px;"></div>
<div class="fbtn" style="left:1030px;top:697px;width:38px;height:34px;"></div>
<div class="fbtn" style="left:1070px;top:625px;width:38px;height:34px;"></div>
<div class="fbtn" style="left:1070px;top:697px;width:38px;height:34px;"></div>
<div class="fbtn" style="left:1110px;top:625px;width:40px;height:34px;"></div>
<div class="fbtn" style="left:1110px;top:697px;width:40px;height:34px;"></div>
<svg style="left:1038px;top:631px" width="22" height="22" viewBox="0 0 22 22">
<ellipse cx="11" cy="19.4" rx="7.5" ry="1.3" fill="#000" opacity=".10"/>
<path d="M1.3 11.2 L4.2 9 L9.1 13.6 L16.3 1.3 L19.7 3.7 L10.4 19.1 Z" fill="#cdf09c" stroke="#6abd1c" stroke-width="1.15" stroke-linejoin="round"/>
<path d="M3.2 11.3 L4.2 10.6 L9.4 15.4 L16.8 3.1 L17.9 3.9 L10.1 16.9 Z" fill="#a6e45c" opacity=".45"/>
</svg>
<svg style="left:1121px;top:631px" width="20" height="22" viewBox="0 0 20 22">
<ellipse cx="10" cy="19.6" rx="7.5" ry="1.2" fill="#000" opacity=".10"/>
<path d="M4.2 2.6 L6.8 1.4 L10.2 7.4 L14.2 1.8 L17 3.6 L12.4 10 L16 16.2 L13.2 18.2 L9.8 12.6 L5.8 18 L3 16.2 L7.6 9.6 L3.4 4.2 Z" fill="#f29292" stroke="#cf2626" stroke-width="1.1" stroke-linejoin="round"/>
<path d="M5.6 3.6 L10 10 L5.4 16.2 M14.8 3.6 L10.4 10 L14 16.2" fill="none" stroke="#f7b6b6" stroke-width="1" opacity=".85"/>
</svg>
<svg style="left:1079px;top:630px" width="20" height="23" viewBox="0 0 20 23">
<defs><linearGradient id="tr" x1="0" x2="1"><stop offset="0" stop-color="#5e5e5e"/><stop offset=".3" stop-color="#a8a8a8"/><stop offset=".55" stop-color="#c2c2c2"/><stop offset="1" stop-color="#5a5a5a"/></linearGradient>
<radialGradient id="trl" cx=".5" cy=".35" r=".7"><stop offset="0" stop-color="#cfcfcf"/><stop offset="1" stop-color="#777"/></radialGradient></defs>
<ellipse cx="10" cy="20.2" rx="8" ry="1.5" fill="#000" opacity=".12"/>
<path d="M2.4 7 V18.4 Q2.4 20.8 9.8 20.8 Q17.2 20.8 17.2 18.4 V7Z" fill="url(#tr)"/>
<path d="M5 10 V19.6 M7.4 10.4 V20.2 M9.8 10.6 V20.4 M12.2 10.4 V20.2 M14.6 10 V19.6" stroke="#6f6f6f" stroke-width=".6" opacity=".8"/>
<ellipse cx="9.8" cy="6.4" rx="8.3" ry="4.4" fill="url(#trl)" stroke="#6c6c6c" stroke-width=".5"/>
<ellipse cx="9.8" cy="4.7" rx="2.6" ry="1.4" fill="#3c3c3c"/>
<ellipse cx="9.8" cy="4.2" rx="1.3" ry=".6" fill="#8a8a8a"/>
</svg>
<span class="t" style="left:1029.60px;top:670.04px;font-size:12px;line-height:16px;color:#000;letter-spacing:-0.620px;">New</span>
<svg style="left:1037px;top:704px" width="25" height="20" viewBox="0 0 25 20">
<defs><linearGradient id="rs1037" gradientUnits="userSpaceOnUse" x1="21.4" y1="1.9" x2="10.9" y2="14.1">
<stop offset="0" stop-color="#c25e5e"/><stop offset=".30" stop-color="#d07070"/><stop offset=".42" stop-color="#8e3c3e"/><stop offset=".51" stop-color="#662628"/><stop offset=".66" stop-color="#b45252"/><stop offset="1" stop-color="#c86666"/></linearGradient></defs>
<path d="M1.1 18.3 L3.9 14.6 L20.5 14.8 L20.2 18.5Z" fill="#3e3e3e"/>
<path d="M7 2.3 L20.2 1.3 L24 14.3 L3.9 14.9Z" fill="url(#rs1037)"/>
</svg>
<svg style="left:1077px;top:703px" width="24" height="22" viewBox="0 0 24 22">
<defs><radialGradient id="bs1077" cx="0.45" cy="0.4" r="0.6"><stop offset="0" stop-color="#5a6cf0"/><stop offset="0.6" stop-color="#3040c8"/><stop offset="1" stop-color="#1a2488"/></radialGradient></defs>
<ellipse cx="9.5" cy="13.9" rx="8.7" ry="8.2" fill="#3c3c3c"/>
<circle cx="14.3" cy="9.9" r="8.8" fill="url(#bs1077)"/>
</svg>
<svg style="left:1119px;top:702px" width="22" height="24" viewBox="0 0 22 24">
<path d="M8.7 4.5 C3.2 7 0.6 12.6 3.4 18.6 C5.8 23 11.6 24 16 21 C19.6 18 18.6 12 13.3 8.4" fill="none" stroke="#484848" stroke-width="1.2" stroke-linecap="round"/>
<path d="M11.3 1.7 C5.6 3.4 2.6 9.6 4.8 16.2 C6.8 21 12.8 22.4 17.2 19.2 C21.4 15.8 20.6 9.6 15.4 5.7" fill="none" stroke="#12c41a" stroke-width="1.55" stroke-linecap="round"/>
</svg>
<!--PANELS-->
</body></html>
